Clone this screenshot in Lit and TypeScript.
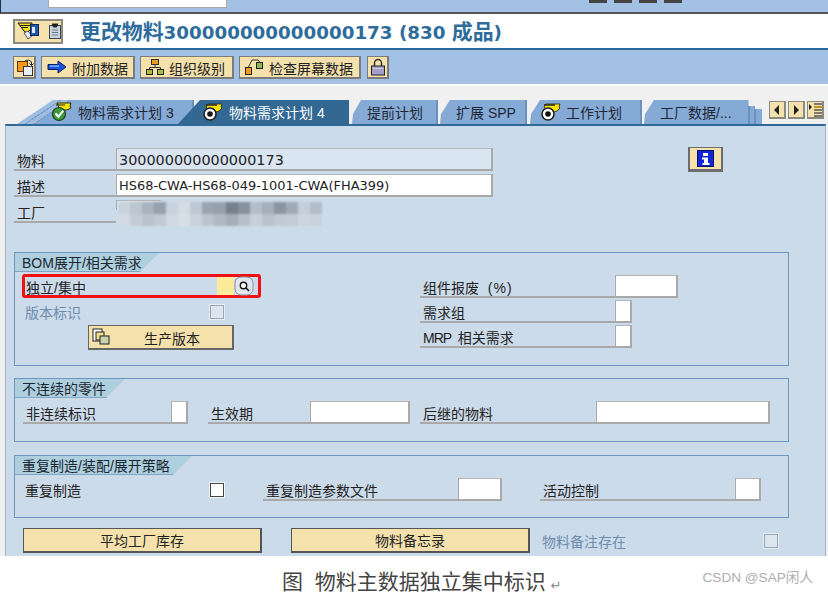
import { LitElement, html, css, svg } from "lit";
import { customElement } from "lit/decorators.js";

const mosaic: string[][] = [
  ["#c9d3dd","#bcc6d1","#a9b3be","#96a1ac","#c8d2dc","#d4dde6","#bfc9d4","#9aa5b0","#96a1ac","#76818c","#86919c","#b3bec9","#a4afba","#8a95a0","#a0abb6","#c5cfda","#b2bdc8"],
  ["#d2dbe4","#c4cdd7","#b9c3ce","#c0cad4","#d0d9e2","#d6dfe8","#c9d3dd","#bac4cf","#b0bac5","#a3aeb9","#b6c0cb","#c6d0da","#b9c3ce","#c0cad5","#c2ccd7","#ccd6e0","#c9d3dd"],
];

const tabCheck = svg`<svg class="ticon" viewBox="0 0 20 20" width="20" height="20">
  <path d="M5 1h14l-1 3 1 2-4 2H8z" fill="#f4e20a" stroke="#2a2a10" stroke-width="1"/>
  <path d="M4 3h9" stroke="#222" stroke-width="1.2"/>
  <circle cx="7" cy="12" r="6.500" fill="#3d9a3a" stroke="#1f3f1f" stroke-width="1.200"/>
  <path d="M3.500 11.500l2.800 3.200 5-6" fill="none" stroke="#fff" stroke-width="2"/></svg>`;
const tabTarget = svg`<svg class="ticon" viewBox="0 0 20 20" width="20" height="20">
  <path d="M3 5l2-3h14l-1 3 1 1-3 3-3 1-2-3H5z" fill="#f8e400" stroke="#222" stroke-width=".8"/>
  <path d="M3 3h11" stroke="#222" stroke-width="1.600"/>
  <circle cx="7" cy="12" r="6" fill="#fff" stroke="#222" stroke-width="1.600"/>
  <circle cx="7" cy="12" r="2.800" fill="#111"/></svg>`;

@customElement("app-root")
export class AppRoot extends LitElement {
  static styles = css`
    :host {
      display: block; position: relative; width: 828px; height: 592px; overflow: hidden; background: #fff;
      font-family: "Liberation Sans", "Noto Sans CJK SC", sans-serif; font-size: 14px; color: #222;
    }
    * { box-sizing: border-box; }
    svg { display: block; flex: none; }
    .top { height: 14px; background: #a3c1e4; border-bottom: 2px solid #555; border-left: 1px solid #234; display: flex; align-items: flex-start; }
    .scrap { height: 4px; }
    .scrap.w { width: 179px; height: 8px; margin-left: 47px; background: #fff; border: 1px solid #aaa; border-top: 0; }
    .scrap.d { width: 18px; height: 3px; background: #444; margin-left: 7px; }
    .scrap.first { margin-left: 362px; }
    .title { height: 36px; border-bottom: 2px solid #2a679c; display: flex; align-items: center; padding: 0 0 0 13px; }
    .title h1 { margin: -3px 0 0 17px; font: bold 18.3px "DejaVu Sans", "Noto Sans CJK SC", sans-serif; color: #2d6c9b; white-space: nowrap; }
    .title h1 b { font-size: 20.9px; font-weight: 700; }
    .btn { background: #f4e1ac; border: 1px solid #7b7b7b; border-right-width: 2px; border-bottom-width: 2px; display: flex; align-items: center; flex: none; }
    .tb-fav { width: 50px; height: 25px; gap: 5px; padding-left: 2px; border-width: 2px; border-color: #8b8b80; }
    .tb-fav i { width: 1px; height: 15px; background: #b4b0a0; }
    .toolbar { height: 34px; background: #a3c1e4; display: flex; gap: 5px; padding: 6px 0 0 13px; }
    .tool { height: 23px; padding-left: 5px; gap: 5px; font-size: 14px; }
    .tool span { padding-top: 2px; }
    .tool.a { width: 23px; padding-left: 2px; }
    .tool.b { width: 94px; }
    .tool.c { width: 122px; padding-left: 4px; }
    .tool.d { width: 22px; padding-left: 2px; margin-left: 1px; }
    .stage { height: 472px; background: #f0f0f0; border-top: 2px solid #fff; padding-top: 14px; }
    .tabs { height: 24px; display: flex; position: relative; }
    .tab { height: 24px; background: #85aad6; display: flex; align-items: center; color: #1d2733; flex: none; white-space: nowrap; position: relative; box-shadow: inset -2px 0 0 #6d91bd; }
    .t1 { width: 177px; margin-left: 17px; padding-left: 35px; gap: 6px; clip-path: polygon(0 100%, 36px 0, 100% 0, 100% 100%); background: linear-gradient(146deg, #9ebde0 0 24px, #7a9dc8 24px 25px, #9ebde0 25px 29px, #7a9dc8 29px 30px, #85aad6 30px); }
    .t2 { width: 171px; margin-left: -16px; padding-left: 25px; gap: 6px; background: #336893; color: #fff; z-index: 1; clip-path: polygon(0 100%, 22px 0, 100% 0, 100% 100%); box-shadow: none; }
    .t3 { width: 86px; margin-left: 3px; padding-left: 15px; clip-path: polygon(0 100%, 1px 14px, 9px 0, 100% 0, 100% 100%); }
    .t4 { width: 87px; margin-left: 2px; padding-left: 16px; clip-path: polygon(0 100%, 1px 14px, 10px 0, 100% 0, 100% 100%); }
    .t5 { width: 112px; margin-left: 3px; padding-left: 11px; gap: 5px; clip-path: polygon(0 100%, 1px 14px, 10px 0, 100% 0, 100% 100%); }
    .t6 { width: 118px; margin-left: 2px; padding-left: 16px; clip-path: polygon(0 100%, 1px 14px, 10px 0, 88.5% 0, 88.5% 6px, 94% 6px, 94% 9px, 100% 9px, 100% 100%); background: linear-gradient(90deg, #85aad6 0 88.5%, #6d91bd 88.5% 90%, #85aad6 90% 93%, #6d91bd 93% 95%, #85aad6 95%); box-shadow: none; }
    .nav { display: flex; gap: 2px; margin: 1px 0 0 7px; }
    .nav .btn { width: 17px; height: 18px; border-color: #8b8b80; justify-content: center; }
    .panel { position: relative; margin: 0 2px 0 5px; height: 432px; background: #ccdbea; border: 1px solid #9db4cc; border-top: 2px solid #2f6a9a; border-bottom: 0; padding: 22px 0 0 8px; }
    .row { display: flex; height: 23px; margin-bottom: 3px; }
    .lab { border-bottom: 2px solid #a9a9a9; padding-left: 3px; display: flex; align-items: flex-end; line-height: 16px; white-space: nowrap; flex: none; }
    .lab span { white-space: pre; }
    .tight { letter-spacing: -1px; }
    .wide { letter-spacing: 1px; }
    .w102 { width: 102px; }
    .w195 { width: 195px; }
    .w148 { width: 148px; }
    .w176 { width: 176px; }
    .inp { background: #fff; border: 2px solid #a9a9a9; border-width: 1px 2px 2px 1px; border-top-color: #b5b5b5; flex: none; height: 23px; }
    .inp.ro { background: #dae5f2; }
    .text { font: 14.4px/22px "DejaVu Sans", sans-serif; padding-left: 2px; color: #222; white-space: nowrap; overflow: hidden; }
    .text.desc { font-size: 12.95px; }
    .i377 { width: 377px; }
    .i63 { width: 63px; }
    .i17 { width: 17px; }
    .i100 { width: 100px; }
    .i174 { width: 174px; }
    .i44 { width: 44px; }
    .i26 { width: 26px; }
    .i44p { width: 45px; border-bottom: 0; border-right: 0; height: 10px; }
    .info { width: 35px; height: 25px; margin: -1px 0 0 195px; justify-content: center; border-color: #6d6d6d; border-width: 1px 2px 3px 2px; }
    .mosaic { position: absolute; left: 108px; top: 75px; display: grid; grid-template-columns: repeat(17, 12px); grid-auto-rows: 12px; filter: blur(1.2px); padding: 1px 0 0 4px; }
    .mosaic span { display: block; }
    .gb { width: 775px; border: 1px solid #6f97bd; flex: none; }
    .g1 { height: 114px; margin-top: 29px; }
    .g2 { height: 64px; margin-top: 12px; }
    .g3 { height: 63px; margin-top: 13px; }
    .gt { height: 19px; background: #aecfdd; display: flex; align-items: center; padding: 0 0 2px 7px; box-shadow: inset 0 -1px 0 #7fa6c4; color: #1d2733; white-space: nowrap; clip-path: polygon(0 0, 100% 0, calc(100% - 19px) 100%, 0 100%); }
    .gt.a { width: 144px; }
    .gt.b { width: 110px; }
    .gt.c { width: 177px; }
    .split { display: flex; }
    .left { width: 246px; flex: none; }
    .red { margin: 2px 0 0 7px; width: 239px; height: 24px; border: 3px solid #f01010; border-radius: 3px; display: flex; align-items: stretch; }
    .red .t { width: 192px; padding-left: 1px; line-height: 22px; }
    .yellow { width: 17px; background: #fdeb9c; }
    .f4 { width: 20px; display: flex; align-items: center; justify-content: center; }
    .rowc { display: flex; align-items: center; height: 16px; margin: 6px 0 0 10px; }
    .rowc .t { width: 184px; }
    .muted { color: #6c8cae; }
    .chk { width: 16px; height: 16px; border: 2px solid #e6edf4; background: #dde6f0; outline: 1px solid #9aa7b4; outline-offset: -2px; flex: none; }
    .chk.on { background: #fff; outline: 1px solid #444; border-color: #f0f5fa; }
    .pv { width: 146px; height: 25px; margin: 5px 0 0 73px; border-color: #666; border-width: 1px 2px 2px 1px; padding-left: 3px; }
    .pv span { margin-left: 34px; padding-top: 2px; }
    .right { margin: 3px 0 0 159px; display: flex; flex-direction: column; gap: 2px; }
    .right .r { display: flex; height: 23px; }
    .fields { display: flex; margin: 3px 0 0 8px; }
    .m20 { margin-left: 20px; }
    .m10 { margin-left: 10px; }
    .m38 { margin-left: 38px; }
    .nr { width: 236px; margin-left: 2px; display: flex; align-items: center; height: 23px; flex: none; }
    .nr .t { width: 184px; flex: none; }
    .m2 { margin-left: 2px; }
    .actions { display: flex; margin: 10px 0 0 9px; align-items: center; }
    .big { height: 25px; width: 239px; justify-content: center; border-color: #555; border-width: 1px 2px 2px 1px; }
    .m29 { margin-left: 29px; }
    .note { margin-left: 12px; width: 221px; flex: none; }
    .caption { font-size: 21px; line-height: 24px; padding: 16px 0 0 282px; color: #444; white-space: pre; display: flex; align-items: center; height: 36px; }
    .caption em { font: 13px "DejaVu Sans", sans-serif; color: #888; margin-left: 5px; padding-top: 6px; }
    .wm { position: absolute; right: 15px; top: 566px; color: #aeaeae; font-size: 13.6px; }
  `;

  field(label: unknown, labCls: string, inpCls: string) {
    return html`<div class="lab ${labCls}">${label}</div><div class="inp ${inpCls}"></div>`;
  }

  render() {
    return html`
      <div class="top">
        <div class="scrap w"></div><div class="scrap d first"></div><div class="scrap d"></div>
        <div class="scrap d"></div><div class="scrap d"></div>
      </div>
      <div class="title">
        <div class="btn tb-fav">
          <svg viewBox="0 0 22 18" width="22" height="18">
            <path d="M1 1h14v6l-5 3v1L7 9z" fill="#f6e21a" stroke="#111"/>
            <path d="M3 3.500h10M4 5.500h7" stroke="#222" stroke-width="1"/>
            <path d="M7 11l4-2 4 5-4 3z" fill="#e8eef4" stroke="#556"/>
            <rect x="13.500" y="2.500" width="8" height="11" fill="#1e5ab4" stroke="#0a2050"/>
            <rect x="15" y="5" width="3" height="6" fill="#dfeaff"/>
          </svg>
          <i></i>
          <svg viewBox="0 0 12 16" width="12" height="16">
            <rect x=".5" y="2.500" width="11" height="13" fill="#c9d4de" stroke="#445"/>
            <path d="M3 0.500h6v2l-1.500 2h-3L3 2.500z" fill="#222"/>
            <path d="M3 7h6M3 9.500h6M3 12h6" stroke="#6a7a8a"/>
          </svg>
        </div>
        <h1><b>更改物料</b>300000000000000173 (830 <b>成品</b>)</h1>
      </div>
      <div class="toolbar">
        <div class="btn tool a">
          <svg viewBox="0 0 18 18" width="18" height="18">
            <rect x="1.500" y="3.500" width="10" height="10" fill="#f39a1c" stroke="#5a3408"/>
            <rect x="7.500" y="8.500" width="9" height="9" fill="#e8eff8" stroke="#334"/>
            <path d="M9 3a4 3 0 0 1 6.500 1l0 3M13.500 5.500l2 2 2-2" fill="none" stroke="#222"/>
          </svg>
        </div>
        <div class="btn tool b">
          <svg viewBox="0 0 20 14" width="20" height="14">
            <path d="M1 4.500h10V1l8 6-8 6V9.500H1z" fill="#1a50e0" stroke="#061a60"/>
            <path d="M3 6h9" stroke="#7fb8ff" stroke-width="1.500"/>
          </svg>
          <span>附加数据</span>
        </div>
        <div class="btn tool b">
          <svg viewBox="0 0 18 16" width="18" height="16">
            <rect x="5.500" y="0.500" width="7" height="5" fill="#f59a1e" stroke="#333"/>
            <path d="M9 6v3M3.500 11V8.500h11V11" fill="none" stroke="#333"/>
            <rect x="0.500" y="10.500" width="6" height="5" fill="#a8c040" stroke="#222"/>
            <rect x="11.500" y="10.500" width="6" height="5" fill="#a8c040" stroke="#222"/>
          </svg>
          <span>组织级别</span>
        </div>
        <div class="btn tool c">
          <svg viewBox="0 0 20 18" width="20" height="18">
            <rect x="1.500" y="9.500" width="6" height="7" fill="#f59a1e" stroke="#222"/>
            <rect x="12.500" y="4.500" width="6" height="6" fill="#8cba50" stroke="#222"/>
            <path d="M4.500 9L8 2h6l2 2.500" fill="none" stroke="#333"/>
          </svg>
          <span>检查屏幕数据</span>
        </div>
        <div class="btn tool d">
          <svg viewBox="0 0 16 18" width="16" height="18">
            <path d="M4.500 8V5a3.500 3.500 0 0 1 7 0v3" fill="none" stroke="#333" stroke-width="1.500"/>
            <rect x="1.500" y="8" width="13" height="9" fill="#a6a0c8" stroke="#222"/>
            <path d="M3 10.500h10" stroke="#d6d2ea"/>
          </svg>
        </div>
      </div>
      <div class="stage">
        <div class="tabs">
          <div class="tab t1">${tabCheck}<span>物料需求计划 3</span></div>
          <div class="tab t2">${tabTarget}<span>物料需求计划 4</span></div>
          <div class="tab t3">提前计划</div>
          <div class="tab t4">扩展 SPP</div>
          <div class="tab t5">${tabTarget}<span>工作计划</span></div>
          <div class="tab t6">工厂数据/...</div>
          <div class="nav">
            <div class="btn"><svg viewBox="0 0 8 10" width="8" height="10"><path d="M6 0v10L1 5z" fill="#222"/></svg></div>
            <div class="btn"><svg viewBox="0 0 8 10" width="8" height="10"><path d="M2 0v10l5-5z" fill="#222"/></svg></div>
            <div class="btn"><svg viewBox="0 0 13 14" width="13" height="14"><path d="M0 1v6l3-3z" fill="#222"/><path d="M5 1h8M5 4h8M5 7h8M5 10h8M5 13h8" stroke="#555" stroke-width="1.500"/><path d="M5 4h8" stroke="#c9a400" stroke-width="1.500"/></svg></div>
          </div>
        </div>
        <div class="panel">
          <div class="row">
            <div class="lab w102">物料</div>
            <div class="inp ro i377 text">300000000000000173</div>
            <div class="btn info">
              <svg viewBox="0 0 17 17" width="17" height="17">
                <rect x=".5" y=".5" width="16" height="16" fill="#1024d8" stroke="#061060"/>
                <path d="M6 3h5v3H6zM5 7.500h6V13h1.500v2h-7v-2H7V9.500H5z" fill="#fff"/>
              </svg>
            </div>
          </div>
          <div class="row">
            <div class="lab w102">描述</div>
            <div class="inp i377 text desc">HS68-CWA-HS68-049-1001-CWA(FHA399)</div>
          </div>
          <div class="row">
            <div class="lab w102">工厂</div>
            <div class="inp ro i44 i44p"></div>
          </div>
          <div class="mosaic">
            ${mosaic.flat().map((c) => html`<span style="background:${c}"></span>`)}
          </div>

          <div class="gb g1">
            <div class="gt a">BOM展开/相关需求</div>
            <div class="split">
              <div class="left">
                <div class="red">
                  <div class="t">独立/集中</div>
                  <div class="yellow"></div>
                  <div class="f4">
                    <svg viewBox="0 0 20 20" width="20" height="20">
                      <rect x="1" y="1" width="18" height="18" rx="6" fill="#dfe6ef" stroke="#8a8f9a"/>
                      <circle cx="9.500" cy="9.500" r="3.200" fill="#fff" stroke="#111" stroke-width="1.400"/>
                      <path d="M12 12l3 3" stroke="#111" stroke-width="1.600"/>
                    </svg>
                  </div>
                </div>
                <div class="rowc muted"><div class="t">版本标识</div><div class="chk"></div></div>
                <div class="btn pv">
                  <svg viewBox="0 0 18 18" width="18" height="18">
                    <rect x="1" y="1" width="9" height="12" fill="#fff" stroke="#222"/>
                    <rect x="4" y="4" width="8" height="8" fill="#f0e090" stroke="#222"/>
                    <rect x="8" y="8" width="9" height="8" fill="#c8d4b0" stroke="#222"/>
                  </svg>
                  <span>生产版本</span>
                </div>
              </div>
              <div class="right">
                <div class="r">${this.field(html`<span>组件报废 </span><span class="wide"> (%)</span>`, "w195", "i63")}</div>
                <div class="r">${this.field("需求组", "w195", "i17")}</div>
                <div class="r">${this.field(html`<span class="tight">MRP </span><span> 相关需求</span>`, "w195", "i17")}</div>
              </div>
            </div>
          </div>

          <div class="gb g2">
            <div class="gt b">不连续的零件</div>
            <div class="fields">
              ${this.field("非连续标识", "w148", "i17")}
              <div class="lab w102 m20">生效期</div><div class="inp i100"></div>
              <div class="lab w176 m10">后继的物料</div><div class="inp i174"></div>
            </div>
          </div>

          <div class="gb g3">
            <div class="gt c">重复制造/装配/展开策略</div>
            <div class="fields">
              <div class="nr"><div class="t">重复制造</div><div class="chk on"></div></div>
              <div class="lab w195 m2">重复制造参数文件</div><div class="inp i44"></div>
              <div class="lab w195 m38">活动控制</div><div class="inp i26"></div>
            </div>
          </div>

          <div class="actions">
            <div class="btn big">平均工厂库存</div>
            <div class="btn big m29">物料备忘录</div>
            <div class="note muted">物料备注存在</div>
            <div class="chk"></div>
          </div>
        </div>
      </div>
      <div class="caption">图  物料主数据独立集中标识<em>↵</em></div>
      <div class="wm">CSDN @SAP闲人</div>
    `;
  }
}
